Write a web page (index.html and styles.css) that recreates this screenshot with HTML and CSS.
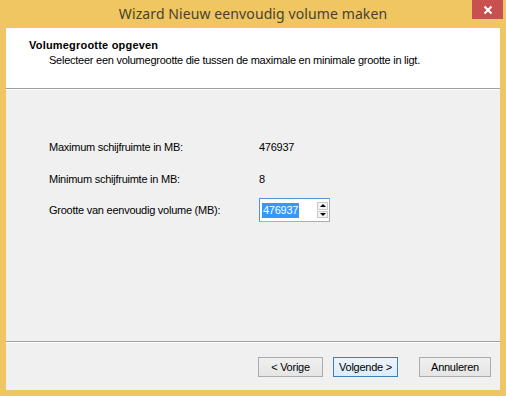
FILE: index.html
```html
<!DOCTYPE html>
<html lang="nl">

<head>
    <meta charset="UTF-8">
    <title>Wizard Nieuw eenvoudig volume maken</title>
    <link rel="stylesheet" href="styles.css">
</head>

<body>
    <div class="window">
        <div class="titlebar">
            <span class="title">Wizard Nieuw eenvoudig volume maken</span>
            <button class="close" type="button">
                <svg width="10" height="10" viewBox="0 0 10 10">
                    <path d="M1.5 1.5 L8.5 8.5 M8.5 1.5 L1.5 8.5" stroke="#fff" stroke-width="2" />
                </svg>
            </button>
        </div>

        <div class="client">
            <div class="header">
                <div class="heading">Volumegrootte opgeven</div>
                <div class="subheading">Selecteer een volumegrootte die tussen de maximale en minimale grootte in ligt.</div>
            </div>

            <div class="content">
                <div class="row">
                    <span class="label">Maximum schijfruimte in MB:</span>
                    <span class="value">476937</span>
                </div>
                <div class="row">
                    <span class="label">Minimum schijfruimte in MB:</span>
                    <span class="value">8</span>
                </div>
                <div class="row field-row">
                    <label class="label" for="size">Grootte van eenvoudig volume (MB):</label>
                    <div class="spinbox">
                        <span class="selected" id="size">476937</span>
                        <div class="spin">
                            <span class="arrow up"></span>
                            <span class="arrow down"></span>
                        </div>
                    </div>
                </div>
            </div>

            <div class="footer">
                <button class="btn" type="button">&lt; Vorige</button>
                <button class="btn default" type="button">Volgende &gt;</button>
                <button class="btn cancel" type="button">Annuleren</button>
            </div>
        </div>
    </div>
</body>

</html>
```

FILE: styles.css
```css
* {
    margin: 0;
    padding: 0;
    box-sizing: border-box;
}

body {
    font-family: "Liberation Sans", Arial, sans-serif;
    font-size: 11px;
    letter-spacing: -0.25px;
    color: #000;
    background-color: #efc661;
    width: 506px;
    height: 396px;
    overflow: hidden;
}

.window {
    display: flex;
    flex-direction: column;
    height: 396px;
    padding: 0 6px 6px 6px;
}

.titlebar {
    position: relative;
    height: 28px;
    display: flex;
    justify-content: center;
    align-items: center;
}

.title {
    font-family: "Noto Sans", sans-serif;
    font-size: 14px;
    letter-spacing: 0.1px;
    color: #4a4130;
    margin-top: -2px;
}

.close {
    position: absolute;
    top: 0;
    right: -3px;
    width: 31px;
    height: 19px;
    border: none;
    background-color: #c75050;
    display: flex;
    justify-content: center;
    align-items: center;
}

.client {
    flex: 1;
    display: flex;
    flex-direction: column;
    background-color: #f0f0f0;
}

.header {
    height: 61px;
    background-color: #fff;
    border-bottom: 1px solid #a0a0a0;
    box-shadow: 0 1px 0 #fff;
    padding: 11px 0 0 23px;
}

.heading {
    font-weight: bold;
    letter-spacing: 0.2px;
    line-height: 13px;
}

.subheading {
    padding-left: 20px;
    margin-top: 2px;
    line-height: 13px;
}

.content {
    flex: 1;
    padding: 51px 0 0 43px;
    border-bottom: 1px solid #a0a0a0;
}

.row {
    display: flex;
    align-items: center;
    height: 13px;
    margin-bottom: 19px;
}

.label {
    width: 210px;
}

.field-row {
    height: 24px;
    margin-top: -6px;
}

.spinbox {
    display: flex;
    align-items: center;
    width: 71px;
    height: 24px;
    background-color: #fff;
    border: 1px solid #abadb3;
    border-left-color: #5b8fd0;
    border-top-color: #5b8fd0;
    padding-left: 2px;
}

.selected {
    background-color: #3399ff;
    color: #fff;
    padding: 0 1px;
    line-height: 15px;
}

.spin {
    display: flex;
    flex-direction: column;
    gap: 1px;
    margin-left: auto;
    margin-right: 1px;
    width: 11px;
    height: 16px;
}

.arrow {
    flex: 1;
    display: flex;
    justify-content: center;
    align-items: center;
    border: 1px solid #c8c8c8;
    background-color: #f4f4f4;
}

.arrow.up::after {
    content: "";
    border-left: 3px solid transparent;
    border-right: 3px solid transparent;
    border-bottom: 3px solid #000;
}

.arrow.down::after {
    content: "";
    border-left: 3px solid transparent;
    border-right: 3px solid transparent;
    border-top: 3px solid #000;
}

.footer {
    height: 48px;
    border-top: 1px solid #fff;
    display: flex;
    align-items: flex-start;
    padding: 14px 0 0 252px;
}

.btn {
    font-family: "Liberation Sans", Arial, sans-serif;
    font-size: 11px;
    letter-spacing: -0.25px;
    width: 65px;
    height: 20px;
    background: linear-gradient(#f0f0f0, #e5e5e5);
    border: 1px solid #acacac;
    color: #000;
}

.btn.default {
    margin-left: 10px;
    border-color: #3c7fb1;
    background: linear-gradient(#ecf4fc, #dcecfc);
}

.btn.cancel {
    margin-left: 21px;
    width: 72px;
}
```
